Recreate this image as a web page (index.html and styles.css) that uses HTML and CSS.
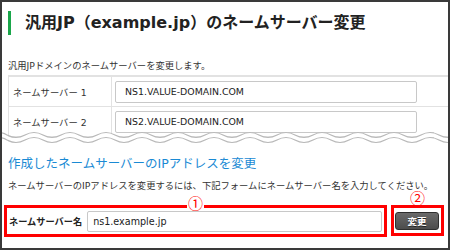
FILE: index.html
```html
<!DOCTYPE html>
<html lang="ja">
<head>
    <meta charset="UTF-8">
    <title>汎用JP ネームサーバー変更</title>
    <link rel="stylesheet" href="styles.css">
</head>
<body>
    <div class="frame">
        <div class="top">
            <h1 class="title">汎用JP（example.jp）のネームサーバー変更</h1>
            <p class="lead">汎用JPドメインのネームサーバーを変更します。</p>
            <div class="ns-table">
                <div class="ns-row">
                    <div class="ns-label">ネームサーバー 1</div>
                    <div class="ns-value"><input class="ns-input" type="text" value="NS1.VALUE-DOMAIN.COM"></div>
                </div>
                <div class="ns-row">
                    <div class="ns-label">ネームサーバー 2</div>
                    <div class="ns-value"><input class="ns-input" type="text" value="NS2.VALUE-DOMAIN.COM"></div>
                </div>
            </div>
        </div>

        <!-- cut line between the two screens -->
        <svg class="wave" width="450" height="22" viewBox="0 0 450 22">
            <path d="M-11,6 q9,-5 18,0 q9,5 18,0 q9,-5 18,0 q9,5 18,0 q9,-5 18,0 q9,5 18,0 q9,-5 18,0 q9,5 18,0 q9,-5 18,0 q9,5 18,0 q9,-5 18,0 q9,5 18,0 q9,-5 18,0 q9,5 18,0 q9,-5 18,0 q9,5 18,0 q9,-5 18,0 q9,5 18,0 q9,-5 18,0 q9,5 18,0 q9,-5 18,0 q9,5 18,0 q9,-5 18,0 q9,5 18,0 q9,-5 18,0 q9,5 18,0 L470,22 L-11,22 Z" fill="#fff"/>
            <path d="M-11,6 q9,-5 18,0 q9,5 18,0 q9,-5 18,0 q9,5 18,0 q9,-5 18,0 q9,5 18,0 q9,-5 18,0 q9,5 18,0 q9,-5 18,0 q9,5 18,0 q9,-5 18,0 q9,5 18,0 q9,-5 18,0 q9,5 18,0 q9,-5 18,0 q9,5 18,0 q9,-5 18,0 q9,5 18,0 q9,-5 18,0 q9,5 18,0 q9,-5 18,0 q9,5 18,0 q9,-5 18,0 q9,5 18,0 q9,-5 18,0 q9,5 18,0" fill="none" stroke="#b8b8b8" stroke-width="1.2"/>
            <path d="M-11,11 q9,-5 18,0 q9,5 18,0 q9,-5 18,0 q9,5 18,0 q9,-5 18,0 q9,5 18,0 q9,-5 18,0 q9,5 18,0 q9,-5 18,0 q9,5 18,0 q9,-5 18,0 q9,5 18,0 q9,-5 18,0 q9,5 18,0 q9,-5 18,0 q9,5 18,0 q9,-5 18,0 q9,5 18,0 q9,-5 18,0 q9,5 18,0 q9,-5 18,0 q9,5 18,0 q9,-5 18,0 q9,5 18,0 q9,-5 18,0 q9,5 18,0" fill="none" stroke="#b8b8b8" stroke-width="1.2"/>
        </svg>

        <div class="bottom">
            <h2 class="sub-title">作成したネームサーバーのIPアドレスを変更</h2>
            <p class="desc">ネームサーバーのIPアドレスを変更するには、下記フォームにネームサーバー名を入力してください。</p>
            <div class="form-row">
                <div class="mark-box name-box">
                    <span class="num num-1">①</span>
                    <label class="name-label">ネームサーバー名</label>
                    <input class="name-input" type="text" value="ns1.example.jp">
                </div>
                <div class="mark-box btn-box">
                    <span class="num num-2">②</span>
                    <button class="btn">変更</button>
                </div>
            </div>
        </div>
    </div>
</body>
</html>
```

FILE: styles.css
```css
* {
    margin: 0;
    padding: 0;
    box-sizing: border-box;
}

body {
    font-family: "DejaVu Sans", "Noto Sans CJK JP", sans-serif;
    color: #333;
    background: #fff;
}

.frame {
    position: relative;
    width: 450px;
    height: 250px;
    border: 2px solid #3a3a3a;
    background: #fff;
    overflow: hidden;
}

.top {
    height: 138px;
    padding: 9px 0 0 6px;
    overflow: hidden;
}

.title {
    height: 24px;
    line-height: 24px;
    padding-left: 14px;
    border-left: 3px solid #1aa64a;
    font-size: 16px;
    font-weight: bold;
    color: #222;
    white-space: nowrap;
}

.lead {
    margin-top: 24px;
    font-size: 9.3px;
    line-height: 14px;
}

.ns-table {
    margin-top: 2px;
    border-top: 2px solid #e2e2e2;
}

.ns-row {
    display: flex;
    height: 30px;
    border-bottom: 1px solid #e2e2e2;
}

.ns-label {
    width: 104px;
    display: flex;
    align-items: center;
    padding-left: 4px;
    border-left: 1px solid #e2e2e2;
    border-right: 1px solid #e2e2e2;
    font-size: 9.3px;
}

.ns-value {
    flex: 1;
    display: flex;
    align-items: center;
    padding-left: 3px;
}

.ns-input {
    width: 302px;
    height: 22px;
    border: 1px solid #c8c8c8;
    border-radius: 2px;
    padding-left: 9px;
    font-family: "DejaVu Sans", sans-serif;
    font-size: 9.4px;
    color: #222;
    background: #fff;
}

.wave {
    position: absolute;
    left: -2px;
    top: 127px;
    display: block;
}

.bottom {
    padding: 16px 0 0 6px;
}

.sub-title {
    font-size: 12.5px;
    line-height: 16px;
    font-weight: normal;
    color: #1a8ad4;
    white-space: nowrap;
}

.desc {
    margin-top: 7px;
    font-size: 9.3px;
    line-height: 14px;
    white-space: nowrap;
}

.form-row {
    display: flex;
    gap: 4px;
    margin-top: 12px;
    margin-left: -4px;
}

.mark-box {
    position: relative;
    display: flex;
    align-items: center;
    border: 3px solid #f00;
}

.name-box {
    width: 383px;
    height: 32px;
    padding: 0 2px;
    gap: 5px;
}

.name-label {
    font-size: 9.2px;
    font-weight: bold;
    color: #222;
    white-space: nowrap;
}

.name-input {
    flex: 1;
    height: 21px;
    border: 1px solid #c8c8c8;
    border-radius: 2px;
    padding-left: 5px;
    font-family: "DejaVu Sans", sans-serif;
    font-size: 9.6px;
    color: #222;
    background: #fff;
}

.btn-box {
    width: 53px;
    height: 31px;
    padding-left: 1px;
}

.btn {
    width: 44px;
    height: 18px;
    border: 1px solid #2e2e2e;
    border-radius: 3px;
    background: linear-gradient(#6a6a6a, #4c4c4c);
    color: #fff;
    font-family: "Noto Sans CJK JP", sans-serif;
    font-size: 9.5px;
    font-weight: bold;
    text-shadow: 0 1px 0 #222;
}

.num {
    position: absolute;
    font-family: "Noto Sans CJK JP", sans-serif;
    font-size: 15px;
    line-height: 15px;
    color: #f00;
    background: #fff;
    padding: 0 1px;
}

.num-1 {
    left: 180px;
    top: -13px;
}

.num-2 {
    left: 15px;
    top: -18px;
    background: transparent;
}
```
